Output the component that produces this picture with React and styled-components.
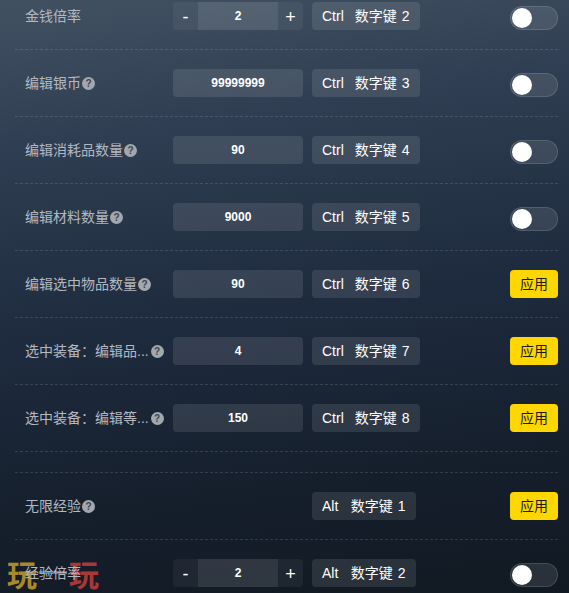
import React from "react";
import styled, { createGlobalStyle } from "styled-components";

const Global = createGlobalStyle`
  html, body { margin: 0; padding: 0; height: 100%; overflow: hidden; }
  body { background: #121a24; font-family: "Liberation Sans", "Noto Sans CJK SC", sans-serif; }
`;

const Page = styled.div`
  position: relative;
  width: 569px;
  height: 593px;
  overflow: hidden;
  background: linear-gradient(172deg, #425162 0%, #2f3e52 22%, #1f2c40 50%, #151f2c 78%, #111922 100%);
`;

const List = styled.div`
  position: relative;
  z-index: 1;
  margin-top: -17px;
  padding: 0 11px 0 15px;
`;

const Row = styled.div`
  display: flex;
  align-items: center;
  height: 66px;
  border-bottom: 1px dashed rgba(255, 255, 255, 0.13);
`;

const Spacer = styled.div`
  height: 20px;
  border-bottom: 1px dashed rgba(255, 255, 255, 0.13);
`;

const Label = styled.div`
  width: 158px;
  padding-left: 10px;
  box-sizing: border-box;
  display: flex;
  align-items: center;
  font-size: 14px;
  line-height: 20px;
  color: #b4b9c0;
  white-space: nowrap;
`;

const Help = styled.span`
  flex: none;
  width: 13px;
  height: 13px;
  margin-left: ${(p) => (p.$far ? "2px" : "1px")};
  border-radius: 50%;
  background: #a3a8ae;
  color: #3a4552;
  font-size: 10px;
  font-weight: 700;
  line-height: 13px;
  text-align: center;
`;

const Control = styled.div`
  flex: none;
  width: 130px;
  height: 28px;
  box-sizing: border-box;
  border-radius: 4px;
  background: rgba(255, 255, 255, 0.1);
  color: #fff;
  font-size: 12px;
  font-weight: 700;
  line-height: 28px;
  text-align: center;
`;

const Stepper = styled.div`
  flex: none;
  width: 130px;
  height: 28px;
  display: grid;
  grid-template-columns: 25px 80px 25px;
  border-radius: 4px;
  overflow: hidden;
  background: rgba(255, 255, 255, 0.05);
  color: #fff;
`;

const StepButton = styled.span`
  font-size: 18px;
  line-height: 31px;
  text-align: center;
`;

const StepValue = styled.span`
  background: rgba(255, 255, 255, 0.08);
  font-size: 12px;
  font-weight: 700;
  line-height: 28px;
  text-align: center;
`;

const EmptyControl = styled.div`
  flex: none;
  width: 130px;
`;

const Hotkey = styled.div`
  flex: none;
  display: flex;
  margin-left: 9px;
  height: 28px;
  padding: 0 10px;
  box-sizing: border-box;
  border-radius: 4px;
  background: rgba(255, 255, 255, 0.1);
  color: #fff;
  font-size: 14px;
  line-height: 28px;
  white-space: nowrap;
`;

const Modifier = styled.span`
  margin-right: ${(p) => p.$gap}px;
`;

const KeyDigit = styled.span`
  margin-left: 5px;
`;

const End = styled.div`
  margin-left: auto;
  display: flex;
`;

const Toggle = styled.div`
  position: relative;
  width: 48px;
  height: 24px;
  margin-top: 4px;
  box-sizing: border-box;
  border-radius: 12px;
  border: 1px solid rgba(255, 255, 255, 0.13);
  background: rgba(255, 255, 255, 0.1);
`;

const Knob = styled.span`
  position: absolute;
  left: 1px;
  top: 1px;
  width: 20px;
  height: 20px;
  border-radius: 50%;
  background: #fff;
`;

const Apply = styled.button`
  width: 48px;
  height: 28px;
  padding: 0;
  border: 0;
  border-radius: 4px;
  background: #ffd700;
  color: #1a1a1a;
  font: 14px/28px "Liberation Sans", "Noto Sans CJK SC", sans-serif;
`;

const Watermark = styled.div`
  position: absolute;
  left: 7px;
  top: 555px;
  width: 92px;
  display: flex;
  justify-content: space-between;
  font-family: "Noto Sans CJK SC", sans-serif;
  font-size: 30px;
  font-weight: 700;
  line-height: 36px;
`;

const Mark = styled.span`
  color: ${(p) => p.$color};
`;

const Glint = styled.span`
  position: absolute;
  left: 32px;
  top: 16px;
  width: 28px;
  height: 3px;
  background: #4f8fc4;
  opacity: 0.8;
`;

const rows = [
  { label: "金钱倍率", step: "2", mod: "Ctrl", digit: "2", end: "toggle" },
  { label: "编辑银币", help: 1, value: "99999999", mod: "Ctrl", digit: "3", end: "toggle" },
  { label: "编辑消耗品数量", help: 1, value: "90", mod: "Ctrl", digit: "4", end: "toggle" },
  { label: "编辑材料数量", help: 1, value: "9000", mod: "Ctrl", digit: "5", end: "toggle" },
  { label: "编辑选中物品数量", help: 1, value: "90", mod: "Ctrl", digit: "6", end: "apply" },
  { label: "选中装备：编辑品...", help: 1, far: 1, value: "4", mod: "Ctrl", digit: "7", end: "apply" },
  { label: "选中装备：编辑等...", help: 1, far: 1, value: "150", mod: "Ctrl", digit: "8", end: "apply" },
  { spacer: 1 },
  { label: "无限经验", help: 1, mod: "Alt", digit: "1", end: "apply" },
  { label: "经验倍率", step: "2", mod: "Alt", digit: "2", end: "toggle" },
];

export default function App() {
  return (
    <Page>
      <Global />
      <Watermark>
        <Mark $color="#a88a2a">玩</Mark>
        <Glint />
        <Mark $color="#a83838">玩</Mark>
      </Watermark>
      <List>
        {rows.map((r, i) =>
          r.spacer ? (
            <Spacer key={i} />
          ) : (
            <Row key={i}>
              <Label>
                {r.label}
                {r.help && <Help $far={r.far}>?</Help>}
              </Label>
              {r.step ? (
                <Stepper>
                  <StepButton>-</StepButton>
                  <StepValue>{r.step}</StepValue>
                  <StepButton>+</StepButton>
                </Stepper>
              ) : r.value ? (
                <Control>{r.value}</Control>
              ) : (
                <EmptyControl />
              )}
              <Hotkey>
                <Modifier $gap={r.mod === "Alt" ? 12.5 : 11}>{r.mod}</Modifier>
                数字键
                <KeyDigit>{r.digit}</KeyDigit>
              </Hotkey>
              <End>
                {r.end === "toggle" ? (
                  <Toggle>
                    <Knob />
                  </Toggle>
                ) : (
                  <Apply>应用</Apply>
                )}
              </End>
            </Row>
          )
        )}
      </List>
    </Page>
  );
}
